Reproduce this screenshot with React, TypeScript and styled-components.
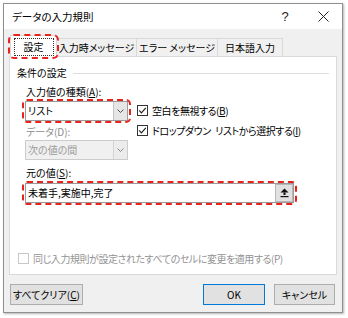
import React from "react";
import styled, { createGlobalStyle, css } from "styled-components";

const Global = createGlobalStyle`
  html, body { margin: 0; padding: 0; background: #ffffff; }
  body {
    font-family: "Noto Sans CJK JP", "Noto Sans", sans-serif;
    font-size: 10px;
    color: #000;
    font-feature-settings: "palt";
  }
  * { box-sizing: border-box; }
`;

const Page = styled.div`
  width: 348px;
  height: 318px;
  padding: 3px 0 0 3px;
`;

const Dialog = styled.div`
  width: 340px;
  height: 310px;
  border: 1px solid #8f8f8f;
  background: #f0f0f0;
  display: flex;
  flex-direction: column;
  box-shadow: 1px 1px 2px rgba(0, 0, 0, 0.3);
`;

const TitleBar = styled.div`
  height: 25px;
  background: #fff;
  display: flex;
  align-items: center;
  padding-left: 8px;
`;

const Title = styled.div`
  flex: 1;
  font-size: 10.5px;
  line-height: 25px;
`;

const TitleButton = styled.div`
  width: 38px;
  height: 25px;
  display: flex;
  align-items: center;
  justify-content: center;
  font-family: "Liberation Sans", sans-serif;
  font-size: 13px;
  color: #222;
`;

const Body = styled.div`
  flex: 1;
  display: flex;
  flex-direction: column;
  padding: 0 5px;
`;

const TabStrip = styled.div`
  height: 27px;
  display: flex;
  align-items: flex-end;
  padding-left: 1px;
  position: relative;
  z-index: 1;
`;

const Tab = styled.div<{ $w: number; $active?: boolean }>`
  width: ${(p) => p.$w}px;
  height: 18px;
  margin-left: -1px;
  border: 1px solid #d9d9d9;
  border-bottom: none;
  background: #f0f0f0;
  display: flex;
  align-items: center;
  justify-content: center;
  white-space: nowrap;
  ${(p) =>
    p.$active &&
    css`
      margin-left: 0;
      height: 22px;
      margin-bottom: -1px;
      background: #fff;
      align-items: flex-start;
      padding-top: 2px;
      position: relative;
      &::after {
        content: "";
        position: absolute;
        left: -3px;
        right: -3px;
        top: -2px;
        bottom: -2px;
        border: 2px dashed #e8231b;
        border-radius: 6px;
      }
    `}
`;

const FocusLabel = styled.span`
  display: block;
  width: 40px;
  height: 18px;
  border: 1px dotted #333;
  text-align: center;
  line-height: 16px;
`;

const Panel = styled.div`
  height: 219px;
  background: #fff;
  border: 1px solid #d9d9d9;
  padding: 9px 7px 8px 7px;
  display: flex;
  flex-direction: column;
`;

const GroupHeader = styled.div`
  height: 14px;
  display: flex;
  align-items: center;
  gap: 6px;
  line-height: 14px;
`;

const Rule = styled.div`
  flex: 1;
  height: 1px;
  background: #dcdcdc;
`;

const GroupBody = styled.div`
  padding-left: 8px;
  margin-top: 5px;
  display: flex;
  flex-direction: column;
`;

const Columns = styled.div`
  display: flex;
  gap: 9px;
`;

const LeftCol = styled.div`
  width: 103px;
  display: flex;
  flex-direction: column;
`;

const RightCol = styled.div`
  padding-top: 15px;
  display: flex;
  flex-direction: column;
`;

const FieldLabel = styled.div<{ $disabled?: boolean; $mt?: number; $mb?: number }>`
  height: 14px;
  line-height: 14px;
  padding-left: 1px;
  margin-top: ${(p) => p.$mt ?? 0}px;
  margin-bottom: ${(p) => p.$mb ?? 0}px;
  color: ${(p) => (p.$disabled ? "#8d8d8d" : "#000")};
  white-space: nowrap;
`;

const U = styled.span`
  text-decoration: underline;
  text-underline-offset: 1px;
`;

const Highlight = styled.div<{ $w: number }>`
  position: relative;
  width: ${(p) => p.$w}px;
  &::after {
    content: "";
    position: absolute;
    left: -3px;
    right: -3px;
    top: -2px;
    bottom: -2px;
    border: 2px dashed #e8231b;
    border-radius: 5px;
    pointer-events: none;
  }
`;

const Select = styled.div<{ $disabled?: boolean }>`
  height: 20px;
  display: flex;
  border: 1px solid ${(p) => (p.$disabled ? "#cccccc" : "#9a9a9a")};
  background: ${(p) => (p.$disabled ? "#f0f0f0" : "#fff")};
  color: ${(p) => (p.$disabled ? "#9a9a9a" : "#000")};
`;

const SelectText = styled.div`
  flex: 1;
  line-height: 18px;
  padding-left: 2px;
  white-space: nowrap;
`;

const SelectButton = styled.div<{ $disabled?: boolean }>`
  width: 14px;
  display: flex;
  align-items: center;
  justify-content: center;
  background: ${(p) => (p.$disabled ? "#ececec" : "#e6e6e6")};
  border-left: 1px solid ${(p) => (p.$disabled ? "#d4d4d4" : "#c4c4c4")};
`;

const CheckRow = styled.div<{ $disabled?: boolean }>`
  height: 20px;
  display: flex;
  align-items: center;
  gap: 4px;
  white-space: pre;
  letter-spacing: -0.45px;
  color: ${(p) => (p.$disabled ? "#939393" : "#000")};
`;

const InputBox = styled.div`
  height: 20px;
  display: flex;
  border: 1px solid #9a9a9a;
  background: #fff;
`;

const InputText = styled.div`
  flex: 1;
  line-height: 18px;
  padding-left: 2px;
  white-space: nowrap;
`;

const InputButton = styled.div`
  width: 18px;
  display: flex;
  align-items: center;
  justify-content: center;
  background: #e1e1e1;
  border: 1px solid #b8b8b8;
`;

const Spacer = styled.div`
  flex: 1;
`;

const BottomCheck = styled(CheckRow)`
  margin-left: 1px;
  height: 16px;
`;

const Footer = styled.div`
  margin-top: 9px;
  height: 21px;
  display: flex;
  padding: 0 2px 0 1px;
  gap: 9px;
`;

const Button = styled.div<{ $w: number; $primary?: boolean }>`
  width: ${(p) => p.$w}px;
  height: 21px;
  background: #e1e1e1;
  border: 1px solid ${(p) => (p.$primary ? "#0078d7" : "#adadad")};
  display: flex;
  align-items: center;
  justify-content: center;
  white-space: nowrap;
  ${(p) => p.$primary && css`margin-left: auto;`}
`;

const Chevron = ({ color }: { color: string }) => (
  <svg width="7" height="4" viewBox="0 0 7 4">
    <polyline points="0.5,0.5 3.5,3.5 6.5,0.5" fill="none" stroke={color} strokeWidth="1" />
  </svg>
);

const CheckBox = ({ checked, disabled }: { checked?: boolean; disabled?: boolean }) => (
  <svg width="11" height="11" viewBox="0 0 11 11">
    <rect x="0.5" y="0.5" width="10" height="10" fill="#fff" stroke={disabled ? "#c8c8c8" : "#333"} />
    {checked && (
      <polyline points="2.2,5.4 4.4,7.8 8.8,2.8" fill="none" stroke="#222" strokeWidth="1.2" />
    )}
  </svg>
);

const CollapseIcon = () => (
  <svg width="9" height="10" viewBox="0 0 9 10">
    <path d="M4.5 0.5 L8.5 4.5 L0.5 4.5 Z" fill="#111" />
    <rect x="3.5" y="4.5" width="2" height="2.5" fill="#111" />
    <rect x="0.5" y="8" width="8" height="1.2" fill="#111" />
  </svg>
);

const CloseIcon = () => (
  <svg width="11" height="11" viewBox="0 0 11 11">
    <path d="M0.5 0.5 L10.5 10.5 M10.5 0.5 L0.5 10.5" stroke="#222" strokeWidth="1" />
  </svg>
);

export default function App() {
  return (
    <>
      <Global />
      <Page>
        <Dialog>
          <TitleBar>
            <Title>データの入力規則</Title>
            <TitleButton>?</TitleButton>
            <TitleButton>
              <CloseIcon />
            </TitleButton>
          </TitleBar>
          <Body>
            <TabStrip>
              <Tab $w={47} $active>
                <FocusLabel>設定</FocusLabel>
              </Tab>
              <Tab $w={81}>入力時メッセージ</Tab>
              <Tab $w={82}>エラー メッセージ</Tab>
              <Tab $w={66}>日本語入力</Tab>
            </TabStrip>
            <Panel>
              <GroupHeader>
                <span>条件の設定</span>
                <Rule />
              </GroupHeader>
              <GroupBody>
                <Columns>
                  <LeftCol>
                    <FieldLabel $mb={2}>
                      入力値の種類(<U>A</U>):
                    </FieldLabel>
                    <Highlight $w={103}>
                      <Select>
                        <SelectText>リスト</SelectText>
                        <SelectButton>
                          <Chevron color="#555" />
                        </SelectButton>
                      </Select>
                    </Highlight>
                    <FieldLabel $disabled $mt={4} $mb={1}>
                      データ(D):
                    </FieldLabel>
                    <Select $disabled>
                      <SelectText>次の値の間</SelectText>
                      <SelectButton $disabled>
                        <Chevron color="#8a8a8a" />
                      </SelectButton>
                    </Select>
                  </LeftCol>
                  <RightCol>
                    <CheckRow>
                      <CheckBox checked />
                      <span>
                        空白を無視する(<U>B</U>)
                      </span>
                    </CheckRow>
                    <CheckRow>
                      <CheckBox checked />
                      <span>
                        {"ドロップダウン\u2002リストから選択する("}<U>I</U>)
                      </span>
                    </CheckRow>
                  </RightCol>
                </Columns>
                <FieldLabel $mt={6} $mb={3}>
                  元の値(<U>S</U>):
                </FieldLabel>
                <Highlight $w={269}>
                  <InputBox>
                    <InputText>未着手,実施中,完了</InputText>
                    <InputButton>
                      <CollapseIcon />
                    </InputButton>
                  </InputBox>
                </Highlight>
              </GroupBody>
              <Spacer />
              <BottomCheck $disabled>
                <CheckBox disabled />
                <span>同じ入力規則が設定されたすべてのセルに変更を適用する(P)</span>
              </BottomCheck>
            </Panel>
            <Footer>
              <Button $w={73}>
                すべてクリア(<U>C</U>)
              </Button>
              <Button $w={62} $primary>
                OK
              </Button>
              <Button $w={61}>キャンセル</Button>
            </Footer>
          </Body>
        </Dialog>
      </Page>
    </>
  );
}
